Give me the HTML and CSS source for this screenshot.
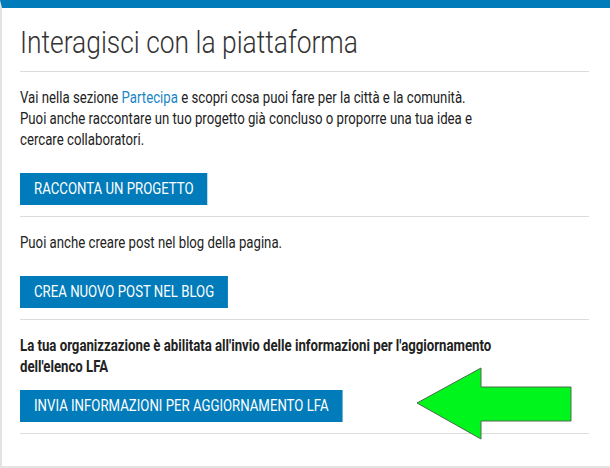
FILE: index.html
```html
<!DOCTYPE html>
<html lang="it">
<head>
    <meta charset="UTF-8">
    <meta name="viewport" content="width=device-width, initial-scale=1.0">
    <title>Interagisci con la piattaforma</title>
    <link rel="stylesheet" href="styles.css">
</head>
<body>
    <div class="panel">
        <h2 class="panel-title"><span>Interagisci con la piattaforma</span></h2>

        <div class="section">
            <div class="section-body">
                <p>Vai nella sezione <a href="#">Partecipa</a> e scopri cosa puoi fare per la città e la comunità.<br>Puoi anche raccontare un tuo progetto già concluso o proporre una tua idea e cercare collaboratori.</p>
                <a class="btn" href="#">Racconta un progetto</a>
            </div>
        </div>

        <div class="section">
            <div class="section-body">
                <p>Puoi anche creare post nel blog della pagina.</p>
                <a class="btn" href="#">Crea nuovo post nel blog</a>
            </div>
        </div>

        <div class="section">
            <div class="section-body">
                <p class="strong">La tua organizzazione è abilitata all'invio delle informazioni per l'aggiornamento dell'elenco LFA</p>
                <a class="btn" href="#">Invia informazioni per aggiornamento LFA</a>
            </div>
        </div>

        <!-- freccia evidenziatore sopra il pannello -->
        <svg class="arrow" width="170" height="90" viewBox="0 0 170 90">
            <polygon points="7,43 71,8 71,27 161,27 161,61 71,61 71,79" fill="#00f51c" stroke="#4d6b4d" stroke-width="1"/>
        </svg>
    </div>
</body>
</html>
```

FILE: styles.css
```css
body {
    margin: 0;
    font-family: 'Roboto', Arial, sans-serif;
    color: #222;
    background: #fff;
}
.panel {
    position: relative;
    border-top: 8px solid #017bba;
    border-left: 2px solid #e3e3e3;
    border-bottom: 2px solid #e3e3e3;
    padding: 0 21px 32px 18px;
    height: 426px;
}
.panel-title {
    font-size: 32px;
    font-weight: 300;
    line-height: 40px;
    color: #333;
    margin: 14px 0 0;
    padding-bottom: 9px;
    border-bottom: 1px solid #dcdcdc;
    white-space: nowrap;
}
/* il riferimento e' stretto in orizzontale */
.panel-title span {
    display: inline-block;
    transform: scaleX(0.825);
    transform-origin: 0 0;
}
.section {
    padding: 15px 0 11px;
    border-bottom: 1px solid #dcdcdc;
}
.section-body {
    transform: scaleX(0.825);
    transform-origin: 0 0;
    width: 121.2%;
}
.section p {
    font-size: 16px;
    line-height: 21px;
    margin: 0 0 23px;
    max-width: 590px;
}
.section a {
    color: #1a86c4;
    text-decoration: none;
}
.section p.strong {
    font-weight: bold;
    margin-bottom: 13px;
}
.btn {
    display: inline-block;
    background: #017bba;
    color: #fff !important;
    text-transform: uppercase;
    font-size: 16px;
    line-height: 32px;
    height: 32px;
    padding: 0 17px;
}
.arrow {
    position: absolute;
    left: 408px;
    top: 352px;
}
```
